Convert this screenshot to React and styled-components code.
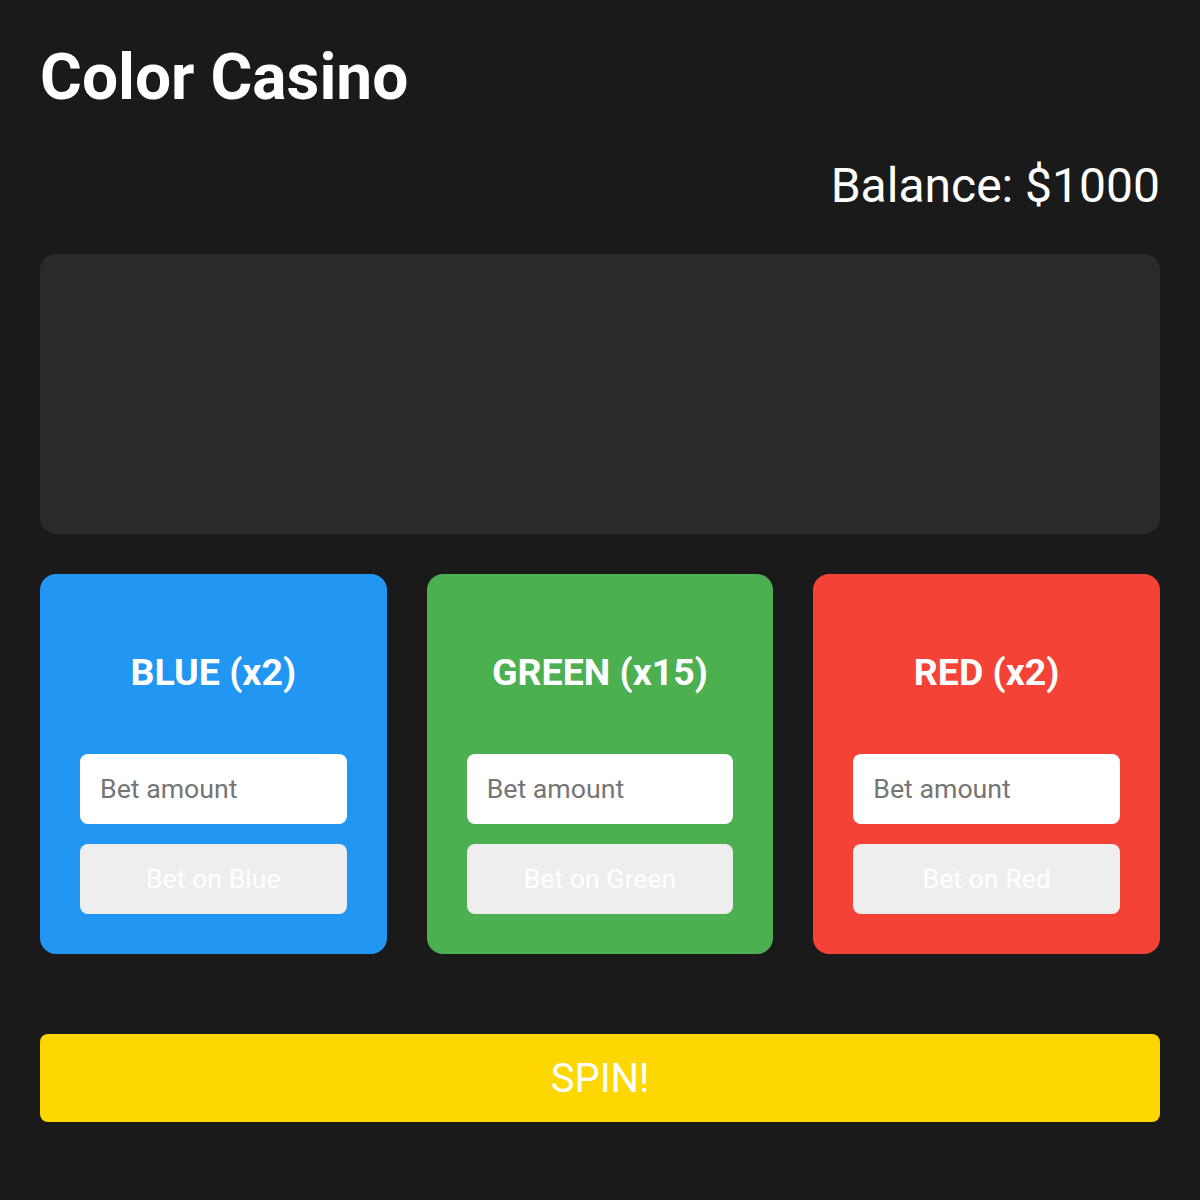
import React from "react";
import styled, { createGlobalStyle } from "styled-components";

const Global = createGlobalStyle`
  html, body { margin: 0; padding: 0; background: #1a1a1a; }
  body { font-family: Roboto, "Liberation Sans", sans-serif; color: #fff; }
  * { box-sizing: border-box; }
`;

const Page = styled.div`
  padding: 40px;
  display: flex;
  flex-direction: column;
  min-height: 1200px;
  background: #1a1a1a;
`;

const Title = styled.h1`
  margin: 0;
  font-size: 64px;
  font-weight: 700;
  line-height: normal;
  color: #fff;
`;

const Balance = styled.div`
  margin-top: 42px;
  text-align: right;
  font-size: 48px;
  font-weight: 400;
  line-height: normal;
`;

const Wheel = styled.div`
  margin-top: 40px;
  height: 280px;
  background: #2a2a2a;
  border-radius: 16px;
`;

const Cards = styled.div`
  margin-top: 40px;
  display: grid;
  grid-template-columns: repeat(3, minmax(0, 1fr));
  gap: 40px;
`;

const Card = styled.div`
  background: ${(p) => p.$bg};
  border-radius: 16px;
  padding: 40px;
  display: flex;
  flex-direction: column;
  gap: 20px;
  min-width: 0;
`;

const CardTitle = styled.h2`
  margin: 37px 0 41px;
  text-align: center;
  font-size: 37.5px;
  font-weight: 700;
  line-height: 42px;
  color: #fff;
`;

const Input = styled.input`
  width: 100%;
  min-width: 0;
  height: 70px;
  padding: 0 20px;
  border: none;
  border-radius: 8px;
  background: #fff;
  font-family: Roboto, "Liberation Sans", sans-serif;
  font-size: 26.7px;
  color: #333;
  outline: none;
  &::placeholder { color: #757575; }
`;

const BetButton = styled.button`
  width: 100%;
  height: 70px;
  border: none;
  border-radius: 8px;
  background: #eeeeee;
  color: #fff;
  font-family: Roboto, "Liberation Sans", sans-serif;
  font-size: 26.7px;
  cursor: not-allowed;
`;

const Spin = styled.button`
  margin-top: 80px;
  height: 88px;
  border: none;
  border-radius: 8px;
  background: #ffd700;
  color: #fff;
  font-family: Roboto, "Liberation Sans", sans-serif;
  font-size: 40px;
  cursor: pointer;
`;

const colors = [
  { name: "BLUE", mult: 2, bg: "#2196f3", label: "Blue" },
  { name: "GREEN", mult: 15, bg: "#4caf50", label: "Green" },
  { name: "RED", mult: 2, bg: "#f44336", label: "Red" },
];

export default function App() {
  return (
    <>
      <Global />
      <Page>
        <Title>Color Casino</Title>
        <Balance>Balance: $1000</Balance>
        <Wheel />
        <Cards>
          {colors.map((c) => (
            <Card key={c.name} $bg={c.bg}>
              <CardTitle>
                {c.name} (x{c.mult})
              </CardTitle>
              <Input type="number" placeholder="Bet amount" />
              <BetButton disabled>Bet on {c.label}</BetButton>
            </Card>
          ))}
        </Cards>
        <Spin>SPIN!</Spin>
      </Page>
    </>
  );
}
